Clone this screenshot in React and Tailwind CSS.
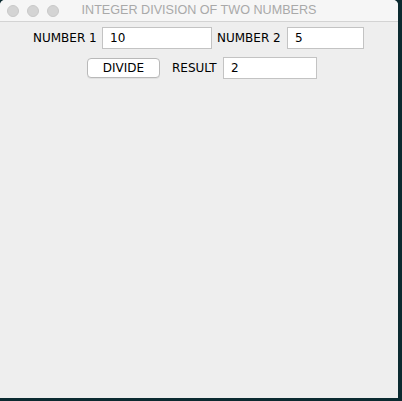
export default function App() {
  const label = "text-[12px] text-black leading-none [font-family:'DejaVu_Sans',sans-serif]";
  const field =
    "h-[22px] bg-white border border-[#c3c3c3] pl-[7px] flex items-center text-[12px] text-black [font-family:'DejaVu_Sans',sans-serif]";

  return (
    <div className="w-[402px] h-[401px] bg-[#0b2a30]">
      <div className="w-[398px] h-[398px] rounded-t-[5px] bg-[#eeeeee] flex flex-col overflow-hidden">
        {/* title bar */}
        <div className="relative h-[22px] shrink-0 bg-[#f6f6f6] border-b border-[#d3d3d3] flex items-center justify-center">
          <div className="absolute left-[7px] top-[5px] flex gap-[8px]">
            <span className="w-[12px] h-[12px] rounded-full bg-[#d4d4d4] border border-[#c8c8c8]" />
            <span className="w-[12px] h-[12px] rounded-full bg-[#d4d4d4] border border-[#c8c8c8]" />
            <span className="w-[12px] h-[12px] rounded-full bg-[#d4d4d4] border border-[#c8c8c8]" />
          </div>
          <span className="text-[12.6px] text-[#a9a9a9] leading-none [font-family:'Liberation_Sans',sans-serif]">
            INTEGER DIVISION OF TWO NUMBERS
          </span>
        </div>

        {/* content */}
        <div className="flex flex-col pt-[5px]">
          <div className="flex items-center h-[22px] pl-[33px]">
            <span className={`${label} w-[69px]`}>NUMBER 1</span>
            <div className={`${field} w-[110px]`}>10</div>
            <span className={`${label} w-[75px] pl-[5px]`}>NUMBER 2</span>
            <div className={`${field} w-[77px]`}>5</div>
          </div>

          <div className="flex items-center h-[22px] mt-[8px] pl-[87px]">
            <button className="w-[73px] h-[20px] bg-white border border-[#b9b9b9] rounded-[4px] shadow-[0_1px_0_rgba(0,0,0,0.05)] flex items-center justify-center text-[12px] text-black leading-none [font-family:'DejaVu_Sans',sans-serif]">
              DIVIDE
            </button>
            <span className={`${label} w-[63px] pl-[12px]`}>RESULT</span>
            <div className={`${field} w-[94px]`}>2</div>
          </div>
        </div>
      </div>
    </div>
  );
}
